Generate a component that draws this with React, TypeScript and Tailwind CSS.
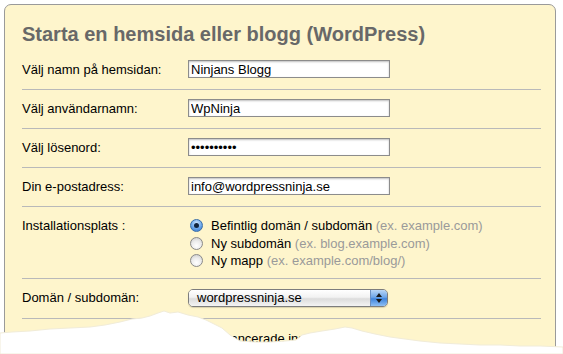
import React from "react";

const font = { fontFamily: '"Liberation Sans", Arial, sans-serif' };

function TextRow({ label, children }: { label: string; children: React.ReactNode }) {
  return (
    <div className="flex items-center border-t border-[#b9b9b9] pt-[9px] pb-[11px]">
      <div className="w-[166px] text-[13px] leading-[17px] text-black">{label}</div>
      {children}
    </div>
  );
}

function Field({ value, type = "text" }: { value: string; type?: string }) {
  return (
    <input
      type={type}
      value={value}
      readOnly
      className="w-[202px] h-[18px] border border-[#8c8c8c] bg-white px-[2px] text-[13px] leading-[16px] text-black outline-none shadow-[inset_0_1px_2px_rgba(0,0,0,0.25)]"
      style={font}
    />
  );
}

function Radio({ checked }: { checked?: boolean }) {
  if (checked) {
    return (
      <span className="flex items-center justify-center w-[13px] h-[13px] rounded-full border border-[#3a6ea8] bg-[radial-gradient(circle_at_50%_30%,#cfe6ff_0%,#6aa6ea_55%,#2f72c8_100%)]">
        <span className="w-[5px] h-[5px] rounded-full bg-[#10233d]" />
      </span>
    );
  }
  return (
    <span className="w-[13px] h-[13px] rounded-full border border-[#8a8a8a] bg-[radial-gradient(circle_at_50%_70%,#ffffff_0%,#ececec_50%,#c6c6c6_100%)]" />
  );
}

function RadioLine({ checked, label, hint }: { checked?: boolean; label: string; hint: string }) {
  return (
    <div className="flex items-center h-[17.5px] gap-[8px] pl-[2px]">
      <Radio checked={checked} />
      <span className="text-[13px] leading-[17px] text-black">
        {label} <span className="text-[#9a9a9a]">{hint}</span>
      </span>
    </div>
  );
}

export default function App() {
  return (
    <div className="relative w-[563px] h-[354px] overflow-hidden bg-white" style={font}>
      <div className="ml-[4px] mt-[4px] w-[552px] h-[360px] rounded-t-[7px] border border-[#9a9a9a] bg-[#fef5cc] pl-[17px] pr-[14px] pt-[17px]">
        <h1 className="text-[20px] leading-[24px] font-bold text-[#686868] mb-[5px]">
          Starta en hemsida eller blogg (WordPress)
        </h1>

        <div className="flex items-center pt-[9px] pb-[11px]">
          <div className="w-[166px] text-[13px] leading-[17px] text-black">Välj namn på hemsidan:</div>
          <Field value="Ninjans Blogg" />
        </div>

        <TextRow label="Välj användarnamn:">
          <Field value="WpNinja" />
        </TextRow>

        <TextRow label="Välj lösenord:">
          <Field value="wpninja123" type="password" />
        </TextRow>

        <TextRow label="Din e-postadress:">
          <Field value="info@wordpressninja.se" />
        </TextRow>

        <div className="flex border-t border-[#b9b9b9] pt-[10px] pb-[8px]">
          <div className="w-[166px] text-[13px] leading-[17.5px] text-black">Installationsplats :</div>
          <div className="flex flex-col">
            <RadioLine checked label="Befintlig domän / subdomän" hint="(ex. example.com)" />
            <RadioLine label="Ny subdomän" hint="(ex. blog.example.com)" />
            <RadioLine label="Ny mapp" hint="(ex. example.com/blog/)" />
          </div>
        </div>

        <div className="flex items-center border-t border-[#b9b9b9] pt-[10px] pb-[11px]">
          <div className="w-[166px] text-[13px] leading-[17px] text-black">Domän / subdomän:</div>
          <div className="flex w-[200px] h-[18px] rounded-[5px] border border-[#7d7d7d] overflow-hidden shadow-[0_1px_1px_rgba(0,0,0,0.15)]">
            <div className="flex-1 flex items-center pl-[8px] text-[13px] text-black bg-[linear-gradient(#ffffff,#f2f2f2_45%,#dcdcdc_55%,#f4f4f4)]">
              wordpressninja.se
            </div>
            <div className="w-[17px] flex flex-col items-center justify-center gap-[2px] border-l border-[#6c8fc0] bg-[linear-gradient(#b9d6f6,#6ea6e8_45%,#3f84dc_55%,#8fc0f4)]">
              <span className="w-0 h-0 border-l-[3px] border-r-[3px] border-b-[4px] border-l-transparent border-r-transparent border-b-[#1b1b1b]" />
              <span className="w-0 h-0 border-l-[3px] border-r-[3px] border-t-[4px] border-l-transparent border-r-transparent border-t-[#1b1b1b]" />
            </div>
          </div>
        </div>

        <div className="flex items-center border-t border-[#b9b9b9] pt-[11px]">
          <div className="w-[166px]" />
          <div className="text-[13px] leading-[17px] text-black">Visa avancerade inställningar</div>
        </div>
      </div>

      {/* torn paper edge */}
      <svg className="absolute left-0 top-0" width="563" height="354" viewBox="0 0 563 354">
        <path
          d="M0 354 L0 333 L12 332 L30 331 L50 329 L70 328 L90 327 L105 325 L120 322 L132 319 L142 318 L150 316 L158 313 L164 311 L170 313 L178 312 L188 315 L198 317 L206 320 L214 324 L222 328 L230 335 L240 341 L255 342 L270 342 L285 341 L296 340 L302 335 L310 333 L322 331 L335 329 L345 327 L352 328 L362 331 L375 334 L390 337 L405 339 L420 341 L440 343 L460 344 L480 345 L500 345 L520 346 L540 346 L563 347 L563 354 Z"
          fill="#ffffff"
          stroke="#f1ecd8"
          strokeWidth="1"
        />
      </svg>
    </div>
  );
}
